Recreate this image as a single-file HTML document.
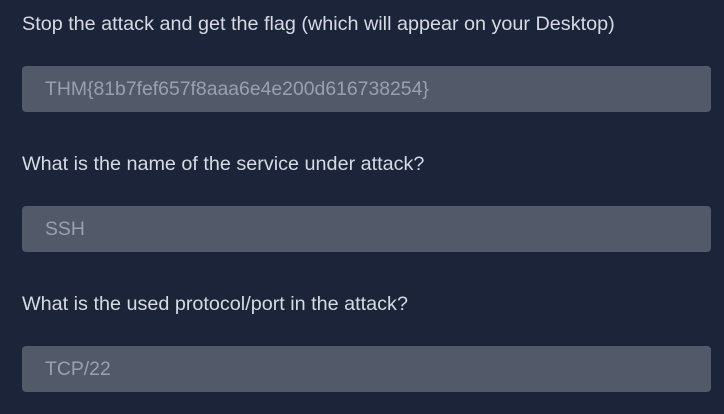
<!DOCTYPE html>
<html><head><style>
html,body{margin:0;padding:0;background:#1c2439;width:724px;height:414px;overflow:hidden;font-family:"Liberation Sans",sans-serif}
.l{position:absolute;left:22px;color:#d6dae2;font-size:19.8px;line-height:24px;white-space:nowrap}
.b{position:absolute;left:22px;width:689px;height:46px;background:#525a69;border-radius:4px;color:#9aa1ae;font-size:19.4px;line-height:46px;box-sizing:border-box;padding-left:23px;white-space:nowrap}
</style></head><body>
<div class="l" style="top:12px">Stop the attack and get the flag (which will appear on your Desktop)</div>
<div class="b" style="top:66px">THM{81b7fef657f8aaa6e4e200d616738254}</div>
<div class="l" style="top:152px">What is the name of the service under attack?</div>
<div class="b" style="top:206px">SSH</div>
<div class="l" style="top:292px">What is the used protocol/port in the attack?</div>
<div class="b" style="top:346px">TCP/22</div>
</body></html>
